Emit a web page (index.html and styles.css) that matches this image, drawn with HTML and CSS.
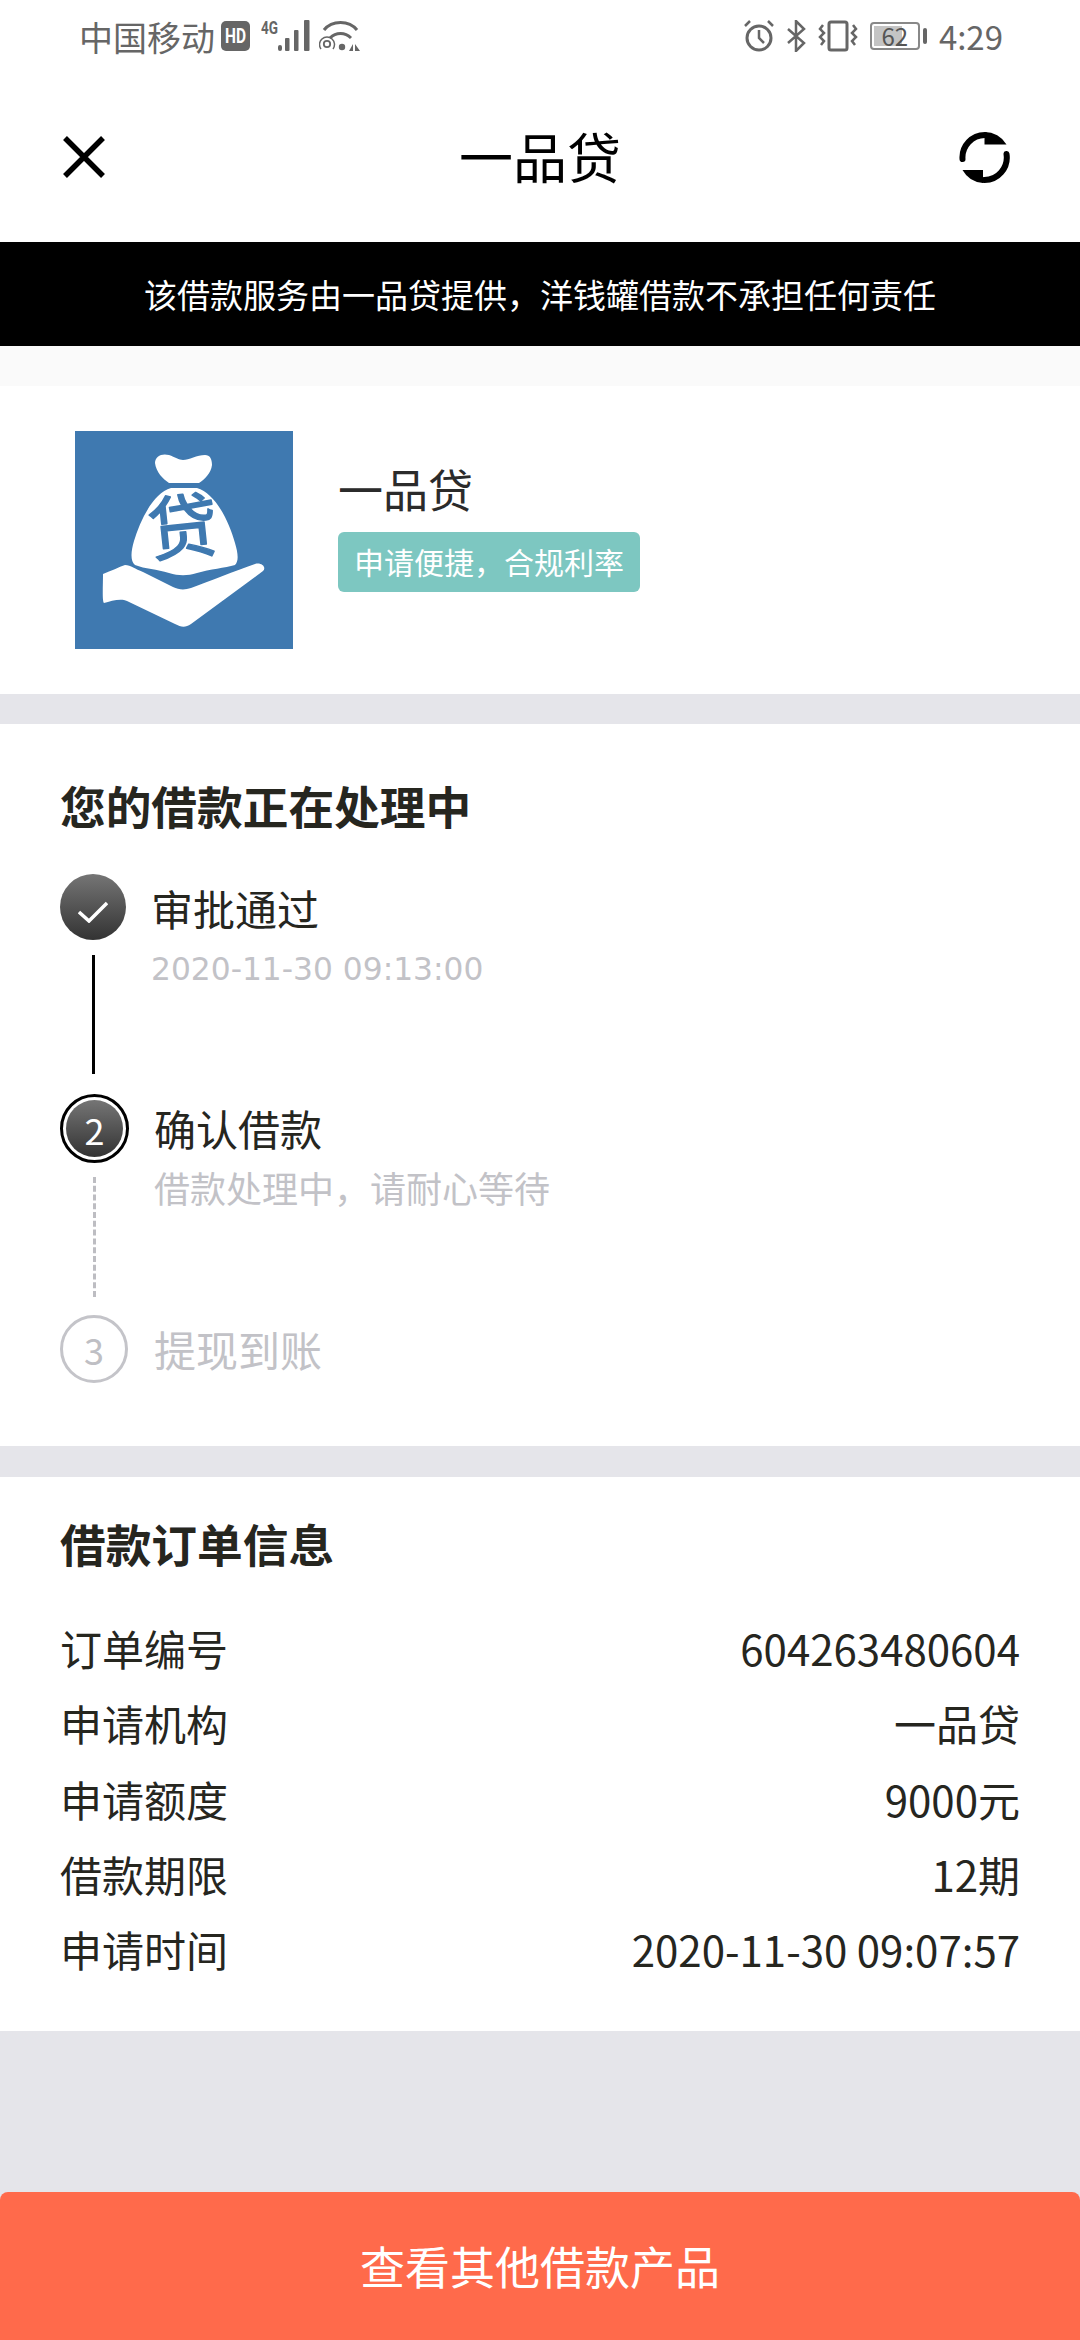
FILE: index.html
```html
<!DOCTYPE html>
<html lang="zh-CN">
<head>
    <meta charset="UTF-8">
    <title>一品贷</title>
    <link rel="stylesheet" href="styles.css">
</head>
<body>
    <div class="status-bar">
        <div class="status-left">
            <span>中国移动</span>
            <svg class="hd" width="29" height="30" viewBox="0 0 29 30"><rect width="29" height="30" rx="5" fill="#666"/><text x="14.5" y="22" text-anchor="middle" class="hd-text" textLength="21" lengthAdjust="spacingAndGlyphs">HD</text></svg>
            <svg class="signal" width="50" height="32" viewBox="0 0 50 32">
                <text x="0" y="14" class="net-text" textLength="17" lengthAdjust="spacingAndGlyphs">4G</text>
                <rect x="17" y="25" width="4" height="6" rx="2" fill="#666"/>
                <rect x="24" y="18" width="4.5" height="13" rx="1" fill="#666"/>
                <rect x="33" y="10" width="4.5" height="21" rx="1" fill="#666"/>
                <rect x="43" y="0" width="5.5" height="31" rx="1" fill="#666"/>
            </svg>
            <svg class="wifi" width="42" height="32" viewBox="0 0 42 32" fill="none" stroke="#666" stroke-width="3">
                <path d="M5 10 C13 0 30 0 38 10"/>
                <path d="M11 18 C17 12 26 12 32 18"/>
                <path d="M2 29 A7.5 7.5 0 1 1 14 29" stroke-width="1.5"/>
                <circle cx="8" cy="24" r="3.2" stroke-width="1.8"/>
                <circle cx="23" cy="27" r="3.2" fill="#666" stroke="none"/>
                <path d="M34 24 V31 L30 31 Z M36 24 V31 L41 31 Z" fill="#666" stroke="none"/>
            </svg>
        </div>
        <div class="status-right">
            <svg width="30" height="32" viewBox="0 0 30 32" fill="none" stroke="#666" stroke-width="3">
                <circle cx="15" cy="18" r="12"/>
                <path d="M15 10 V18 L20 23" stroke-width="2.5"/>
                <path d="M1 6 L6 1 M29 6 L24 1" stroke-width="2.5"/>
            </svg>
            <svg width="20" height="32" viewBox="0 0 20 32" fill="none" stroke="#666" stroke-width="2.5">
                <path d="M2 9 L18 23 L10 31 V1 L18 9 L2 23"/>
            </svg>
            <svg width="40" height="32" viewBox="0 0 40 32" fill="none" stroke="#666" stroke-width="3">
                <rect x="11" y="2" width="18" height="28" rx="2"/>
                <path d="M5 5 L2 9 L6 13 L2 17 L6 21 L3 25" stroke-width="2.5"/>
                <path d="M35 5 L38 9 L34 13 L38 17 L34 21 L37 25" stroke-width="2.5"/>
            </svg>
            <div class="battery">
                <div class="battery-box"><div class="battery-fill"></div><span class="battery-num">62</span></div>
                <div class="battery-tip"></div>
            </div>
            <span class="clock">4:29</span>
        </div>
    </div>

    <div class="nav">
        <svg class="nav-close" width="42" height="42" viewBox="0 0 42 42" stroke="#000" stroke-width="5.5"><path d="M2 2 L40 40 M40 2 L2 40"/></svg>
        <div class="nav-title">一品贷</div>
        <svg width="51" height="51" viewBox="0 0 51 51">
            <path d="M3.5 27 A22.5 22.5 0 0 1 26 3" fill="none" stroke="#000" stroke-width="6" stroke-linecap="round"/>
            <path d="M47.5 22 A22.5 22.5 0 0 1 25 48" fill="none" stroke="#000" stroke-width="6" stroke-linecap="round"/>
            <path d="M25.5 0 A25.5 25.5 0 0 1 47.5 12.5 H25.5 Z" fill="#000"/>
            <path d="M24 51 A25.5 25.5 0 0 1 3.5 38 H24 Z" fill="#000"/>
        </svg>
    </div>

    <div class="notice">该借款服务由一品贷提供，洋钱罐借款不承担任何责任</div>
    <div class="strip"></div>

    <div class="product">
        <svg class="logo" width="218" height="218" viewBox="0 0 218 218">
            <rect width="218" height="218" fill="#3f79b0"/>
            <path d="M80 32 C80 25 87 22 94 24 C100 26 104 29 108 29 C114 29 122 24 130 24 C135 24 137 28 137 34 C136 42 130 48 124 52 H94 C88 48 81 41 80 32 Z" fill="#fff"/>
            <path d="M96 57 H122 C140 62 154 90 160 112 C163 122 164 130 160 134 C150 137 135 138 122 142 C112 145 104 145 94 142 C82 138 70 138 60 134 C55 130 56 120 59 110 C65 90 78 62 96 57 Z" fill="#fff"/>
            <path d="M28 143 C36 140 44 136 50 134 C56 134 60 138 68 141 L98 156 C104 159 110 159 116 157 C135 150 160 140 180 133 C186 131 192 136 188 140 L116 193 C110 197 106 196 100 193 L52 170 C46 167 36 170 29 172 C27 170 28 155 28 143 Z" fill="#fff"/>
            <text class="logo-char" x="108" y="122" text-anchor="middle" transform="rotate(-6 108 97)">贷</text>
        </svg>
        <div class="product-info">
            <div class="product-name">一品贷</div>
            <div class="product-tag">申请便捷，合规利率</div>
        </div>
    </div>

    <div class="card progress">
        <h2 class="card-title">您的借款正在处理中</h2>
        <div class="step step-done">
            <div class="step-icon">
                <svg class="check" width="30" height="22" viewBox="0 0 30 22" fill="none" stroke="#fff" stroke-width="3.5"><path d="M1 11 L11 20 L29 2"/></svg>
            </div>
            <div class="step-body">
                <div class="step-name">审批通过</div>
                <div class="step-time">2020-11-30 09:13:00</div>
            </div>
        </div>
        <div class="step-line"></div>
        <div class="step step-current">
            <div class="step-icon"><span class="step-inner">2</span></div>
            <div class="step-body">
                <div class="step-name">确认借款</div>
                <div class="step-note">借款处理中，请耐心等待</div>
            </div>
        </div>
        <div class="step-line step-line-dash"></div>
        <div class="step step-todo">
            <div class="step-icon">3</div>
            <div class="step-body">
                <div class="step-name">提现到账</div>
            </div>
        </div>
    </div>

    <div class="card order">
        <h2 class="card-title">借款订单信息</h2>
        <div class="order-rows">
            <div class="order-row"><span>订单编号</span><span>604263480604</span></div>
            <div class="order-row"><span>申请机构</span><span>一品贷</span></div>
            <div class="order-row"><span>申请额度</span><span>9000元</span></div>
            <div class="order-row"><span>借款期限</span><span>12期</span></div>
            <div class="order-row"><span>申请时间</span><span>2020-11-30 09:07:57</span></div>
        </div>
    </div>

    <div class="spacer"></div>
    <div class="bottom-btn">查看其他借款产品</div>
</body>
</html>
```

FILE: styles.css
```css
* {
    box-sizing: border-box;
}
html, body {
    height: 100%;
}
body {
    display: flex;
    flex-direction: column;
    margin: 0;
    background-color: #e5e5ea;
    font-family: "Noto Sans CJK SC", "Noto Sans", sans-serif;
    color: #26261f;
}
.status-bar {
    display: flex;
    justify-content: space-between;
    align-items: center;
    height: 72px;
    padding: 0 77px 0 79px;
    background: #fff;
    color: #666;
}
.status-left, .status-right {
    display: flex;
    align-items: center;
    gap: 6px;
    font-size: 34px;
}
.status-right {
    gap: 12px;
}
.hd {
    overflow: visible;
}
.signal {
    margin-left: 5px;
    overflow: visible;
}
.wifi {
    margin-left: 2px;
}
.hd-text {
    font: bold 20px "Roboto", sans-serif;
    fill: #fff;
}
.net-text {
    font: bold 18px "Roboto", sans-serif;
    fill: #666;
}
.battery {
    display: flex;
    align-items: center;
    gap: 3px;
}
.battery-box {
    display: flex;
    justify-content: center;
    align-items: center;
    position: relative;
    width: 50px;
    height: 28px;
    border: 2px solid #888;
    border-radius: 4px;
}
.battery-fill {
    position: absolute;
    top: 2px;
    left: 2px;
    bottom: 2px;
    width: 28px;
    background: #c4c4c4;
}
.battery-num {
    position: relative;
    font-size: 24px;
    line-height: 1;
    color: #555;
}
.battery-tip {
    width: 4px;
    height: 16px;
    border-radius: 2px;
    background: #666;
}
.clock {
    font-size: 33px;
}
.nav {
    display: flex;
    justify-content: space-between;
    align-items: center;
    height: 170px;
    padding: 0 70px 0 63px;
    background: #fff;
}
.nav-close {
    margin-right: 16px;
}
.nav-title {
    padding-bottom: 4px;
    font-size: 54px;
    color: #000;
}
.notice {
    height: 104px;
    line-height: 104px;
    background: #000;
    color: #fff;
    font-size: 33px;
    text-align: center;
}
.strip {
    height: 40px;
    background: #fafafa;
}
.product {
    display: flex;
    align-items: center;
    gap: 45px;
    height: 308px;
    margin-bottom: 30px;
    padding-left: 75px;
    background: #fff;
}
.logo-char {
    font: 400 70px "Noto Sans CJK SC", sans-serif;
    fill: #3f79b0;
    stroke: #3f79b0;
    stroke-width: 1.5px;
    stroke-linejoin: round;
}
.product-info {
    padding-bottom: 29px;
}
.product-name {
    font-size: 45px;
    line-height: 60px;
    color: #2b2b2b;
}
.product-tag {
    margin-top: 13px;
    padding: 0 16px;
    height: 60px;
    line-height: 58px;
    border-radius: 6px;
    background: #7dc7c1;
    color: #fff;
    font-size: 30px;
}
.card {
    background: #fff;
    padding: 0 60px;
}
.card-title {
    margin: 0;
    font-size: 45.7px;
    font-weight: bold;
    color: #26261f;
}
.progress {
    height: 722px;
    margin-bottom: 31px;
    padding-top: 48px;
}
.progress .card-title {
    line-height: 66px;
    margin-bottom: 36px;
}
.step {
    display: flex;
    gap: 26px;
}
.step-icon {
    display: flex;
    justify-content: center;
    align-items: center;
    flex: none;
    width: 66px;
    height: 66px;
    border-radius: 50%;
    font-size: 36px;
}
.step-done {
    gap: 25px;
}
.check {
    margin-top: 10px;
}
.step-done .step-icon, .step-inner {
    background: linear-gradient(#757575, #333);
    color: #fff;
}
.step-current {
    gap: 25px;
}
.step-current .step-icon {
    width: 69px;
    height: 69px;
    border: 3px solid #000;
}
.step-inner {
    display: flex;
    justify-content: center;
    align-items: center;
    width: 57px;
    height: 57px;
    border-radius: 50%;
}
.step-todo .step-icon {
    width: 68px;
    height: 68px;
    border: 3px solid #c4c4c9;
    color: #bfbfc4;
}
.step-name {
    font-size: 42px;
    line-height: 68px;
}
.step-time, .step-note {
    font-size: 36px;
    line-height: 50px;
    color: #c2c2c7;
}
.step-time {
    font-family: "DejaVu Sans", sans-serif;
    font-size: 31.3px;
    line-height: 54px;
}
.step-todo .step-name {
    color: #c2c2c7;
}
.step-line {
    width: 3px;
    height: 119px;
    margin: -41px 0 20px 32px;
    background: #000;
}
.step-line-dash {
    width: 0;
    height: 120px;
    margin: -35px 0 18px 33px;
    background: none;
    border-left: 3px dashed #bdbdc2;
}
.order {
    height: 554px;
    padding-top: 33px;
}
.order .card-title {
    line-height: 66px;
    margin-bottom: 34px;
}
.order-rows {
    display: flex;
    flex-direction: column;
}
.order-row {
    display: flex;
    justify-content: space-between;
    height: 75.3px;
    line-height: 75px;
    font-size: 42px;
}
.spacer {
    flex: 1;
}
.bottom-btn {
    height: 148px;
    line-height: 148px;
    border-radius: 8px 8px 0 0;
    background: #ff6a4b;
    color: #fff;
    font-size: 45px;
    text-align: center;
}
```
